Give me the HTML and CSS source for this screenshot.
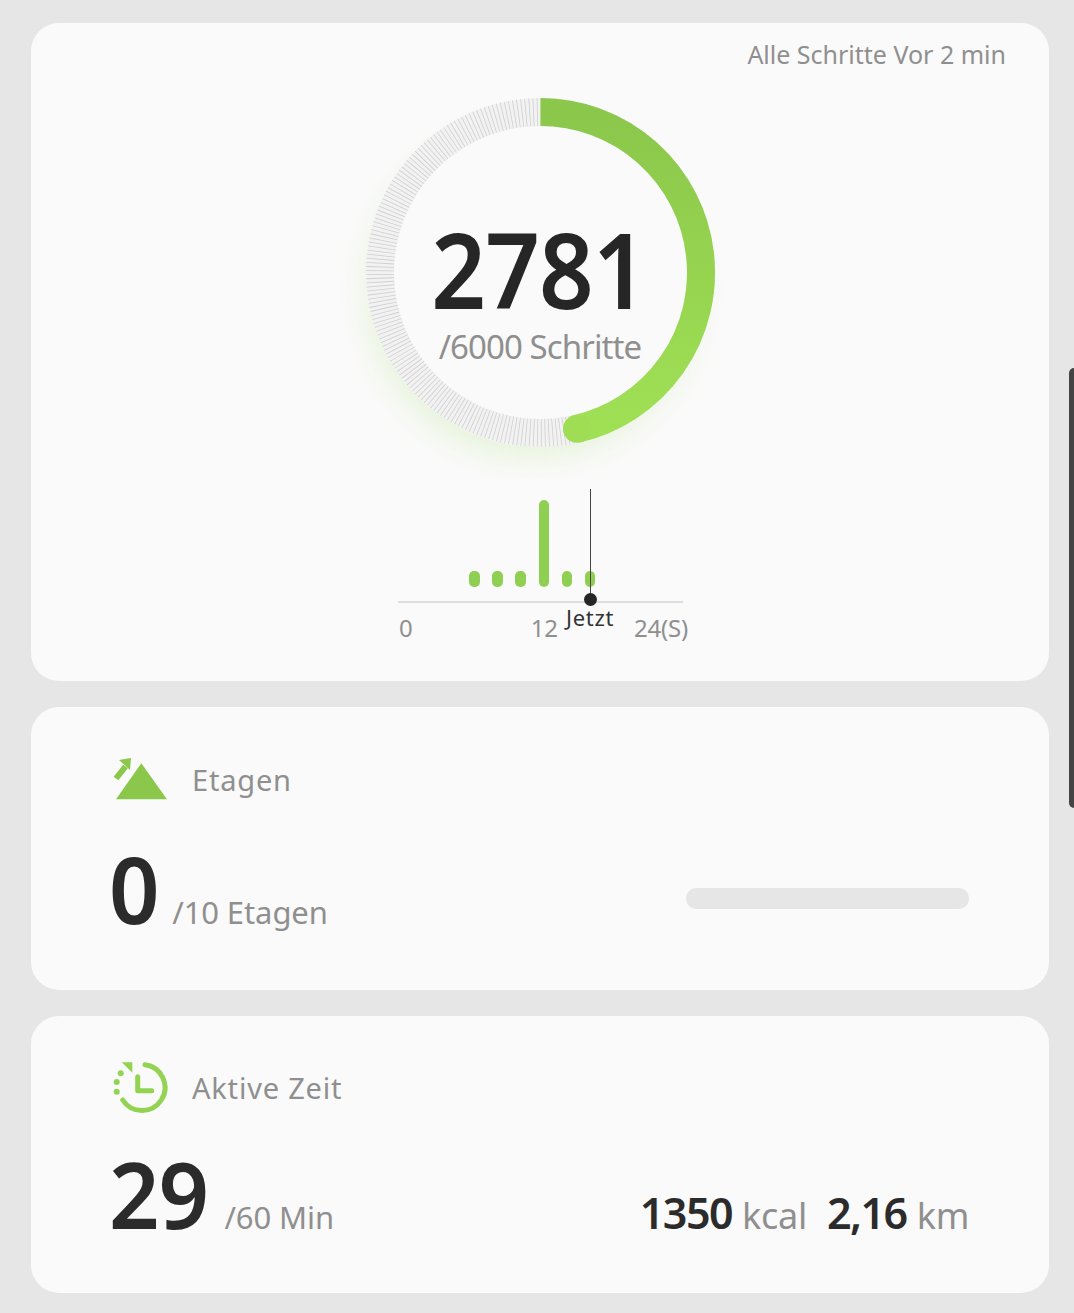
FILE: index.html
```html
<!DOCTYPE html>
<html lang="de">
<head>
  <meta charset="UTF-8">
  <title>Schritte</title>
  <link rel="stylesheet" href="styles.css">
</head>
<body>
  <div class="edge-handle"></div>

  <section class="card steps-card">
    <div class="updated">Alle Schritte Vor 2 min</div>

    <div class="ring-wrap">
      <svg class="ring" width="390" height="410" viewBox="0 0 390 410">
        <defs>
          <linearGradient id="ringGreen" x1="0" y1="0" x2="0" y2="1">
            <stop offset="0" stop-color="#8bc74b"/>
            <stop offset="1" stop-color="#a0e055"/>
          </linearGradient>
          <filter id="glow" x="-30%" y="-30%" width="160%" height="160%">
            <feGaussianBlur stdDeviation="16"/>
          </filter>
        </defs>
        <circle class="ring-glow" cx="187" cy="195" r="165" filter="url(#glow)"/>
        <circle class="ring-inner" cx="195.500" cy="175.500" r="174.500"/>
        <circle class="ring-track" cx="195.500" cy="175.500" r="160.500"/>
        <circle class="ring-hatch" cx="195.500" cy="175.500" r="160.500"/>
        <path class="ring-progress" stroke="url(#ringGreen)" d="M195.500 15 A160.500 160.500 0 0 1 232 331.800"/>
        <circle class="ring-cap" cx="232" cy="331.800" r="14"/>
      </svg>
      <div class="ring-text">
        <div class="ring-count">2781</div>
        <div class="ring-goal">/6000 Schritte</div>
      </div>
    </div>

    <div class="chart">
      <div class="bars">
        <span class="bar"></span>
        <span class="bar"></span>
        <span class="bar"></span>
        <span class="bar bar-tall"></span>
        <span class="bar"></span>
        <span class="bar"></span>
      </div>
      <div class="axis"></div>
      <div class="axis-labels">
        <span>0</span>
        <span class="label-mid">12</span>
        <span>24(S)</span>
      </div>
      <div class="now-line"></div>
      <div class="now-dot"></div>
      <div class="now-label">Jetzt</div>
    </div>
  </section>

  <section class="card floors-card">
    <div class="card-head">
      <svg class="card-icon" width="60" height="50" viewBox="0 0 60 50">
        <path class="icon-fill" d="M30.300 8.300 L56 44.300 L5 44.300 Z"/>
        <path class="icon-fill" d="M20 3 L8 5 L19 15 Z"/>
        <path class="icon-shaft" d="M5 23.500 L14.500 11.500"/>
      </svg>
      <span class="card-title">Etagen</span>
    </div>
    <div class="stat-row floors-row">
      <div class="stat-main">
        <span class="big-number">0</span>
        <span class="stat-goal">/10 Etagen</span>
      </div>
      <div class="progress-empty"></div>
    </div>
  </section>

  <section class="card active-card">
    <div class="card-head">
      <svg class="card-icon" width="60" height="56" viewBox="0 0 60 56">
        <path class="icon-line" d="M34 4.700 A23 23 0 1 1 11.700 40"/>
        <path class="icon-line" d="M26.700 16.700 L26.700 30.700 L40.700 30.700"/>
        <path class="icon-light" d="M10.700 2.300 L21.300 2.300 L21.300 12.700 Z"/>
        <circle class="icon-light" cx="9.700" cy="13.300" r="3"/>
        <circle class="icon-light" cx="5.700" cy="22" r="3"/>
        <circle class="icon-light" cx="5.700" cy="31.700" r="3"/>
      </svg>
      <span class="card-title">Aktive Zeit</span>
    </div>
    <div class="stat-row active-row">
      <div class="stat-main">
        <span class="big-number">29</span>
        <span class="stat-goal">/60 Min</span>
      </div>
      <div class="stat-side">
        <span class="side-number">1350</span>
        <span class="side-unit">kcal</span>
        <span class="side-number side-gap">2,16</span>
        <span class="side-unit">km</span>
      </div>
    </div>
  </section>
</body>
</html>
```
FILE: styles.css
```css
html, body {
  margin: 0;
  height: 1313px;
  overflow: hidden;
}
body {
  background: #e6e6e6;
  padding: 23px 25px 0 31px;
  box-sizing: border-box;
  font-family: "Noto Sans", sans-serif;
  color: #8f8f8f;
  display: flex;
  flex-direction: column;
  gap: 26px;
  position: relative;
}
.edge-handle {
  position: absolute;
  top: 368px;
  right: 0;
  width: 5px;
  height: 440px;
  background: #444;
  border-radius: 6px 0 0 6px;
}
.card {
  background: #fafafa;
  border-radius: 28px;
  box-sizing: border-box;
}

/* Steps card */
.steps-card {
  height: 658px;
  display: flex;
  flex-direction: column;
  padding-top: 13px;
}
.updated {
  align-self: flex-end;
  margin-right: 43px;
  font-size: 25px;
  line-height: 36px;
}
.ring-wrap {
  position: relative;
  align-self: center;
  width: 390px;
  height: 392px;
  margin-top: 25px;
}
.ring {
  display: block;
  overflow: visible;
}
.ring-glow {
  fill: #a5dd70;
  opacity: 0.24;
}
.ring-inner {
  fill: #fafafa;
}
.ring-track {
  fill: #fafafa;
  stroke: #f2f2f2;
  stroke-width: 28;
}
.ring-hatch {
  fill: none;
  stroke: #cfcfcf;
  stroke-width: 28;
  stroke-dasharray: 0.8 3;
}
.ring-progress {
  fill: none;
  stroke-width: 28;
}
.ring-cap {
  fill: #9fdd55;
}
.ring-text {
  position: absolute;
  top: 127px;
  left: 0;
  right: 0;
  text-align: center;
}
.ring-count {
  font-size: 104px;
  line-height: 90px;
  font-weight: 600;
  letter-spacing: -1px;
  color: #262626;
  margin-left: -2px;
  transform: scaleX(0.92);
}
.ring-goal {
  font-size: 33px;
  line-height: 44px;
  letter-spacing: -0.9px;
  margin-top: 11px;
}

/* Hourly chart */
.chart {
  position: relative;
  width: 290px;
  height: 150px;
  margin: 0 0 0 367px;
}
.bars {
  display: flex;
  align-items: flex-end;
  gap: 12.7px;
  height: 87px;
  padding: 11px 0 0 71px;
}
.bar {
  width: 10.5px;
  height: 16px;
  background: #8fd053;
  border-radius: 5px;
}
.bar-tall {
  height: 87px;
}
.axis {
  width: 285px;
  height: 2px;
  margin-top: 14px;
  background: #dedede;
}
.axis-labels {
  display: flex;
  justify-content: space-between;
  margin-top: 10px;
  padding-left: 1px;
  font-size: 24px;
  line-height: 30px;
  letter-spacing: -0.2px;
}
.label-mid {
  margin-left: 42px;
}
.now-line {
  position: absolute;
  left: 191.500px;
  top: 0;
  width: 1.5px;
  height: 110px;
  background: #444;
}
.now-dot {
  position: absolute;
  left: 185.500px;
  top: 103.500px;
  width: 13px;
  height: 13px;
  border-radius: 50%;
  background: #262626;
}
.now-label {
  position: absolute;
  left: 142px;
  width: 100px;
  top: 113px;
  text-align: center;
  font-size: 22px;
  line-height: 30px;
  letter-spacing: 0.7px;
  color: #333;
}

/* Floors and active time */
.floors-card {
  height: 283px;
  padding: 48px 80px 0 80px;
}
.active-card {
  height: 277px;
  padding: 44px 80px 0 80px;
}
.card-head {
  display: flex;
  align-items: center;
  gap: 21px;
}
.card-icon {
  display: block;
  flex: none;
}
.card-title {
  font-size: 29px;
  line-height: 44px;
  letter-spacing: 0.8px;
}
.icon-fill {
  fill: #8bc74b;
}
.icon-shaft {
  fill: none;
  stroke: #8bc74b;
  stroke-width: 6;
}
.icon-line {
  fill: none;
  stroke: #92d352;
  stroke-width: 5;
  stroke-linecap: round;
  stroke-linejoin: round;
}
.icon-light {
  fill: #92d352;
}
.stat-row {
  display: flex;
  justify-content: space-between;
  align-items: baseline;
}
.floors-row {
  margin-top: 28px;
}
.active-row {
  margin-top: 22px;
}
.stat-main {
  display: flex;
  align-items: baseline;
  gap: 11px;
  margin-left: -2px;
}
.big-number {
  font-size: 93px;
  line-height: 110px;
  font-weight: 600;
  letter-spacing: -1px;
  color: #2b2b2b;
  transform: scaleX(0.95);
  transform-origin: left;
}
.stat-goal {
  font-size: 31px;
  letter-spacing: -0.1px;
}
.progress-empty {
  width: 283px;
  height: 21px;
  margin-top: 20px;
  border-radius: 10px;
  background: #e6e6e6;
  align-self: center;
}
.stat-side {
  display: flex;
  align-items: baseline;
  gap: 10px;
}
.side-number {
  font-size: 43px;
  font-weight: 600;
  letter-spacing: -1.5px;
  color: #2b2b2b;
}
.side-gap {
  margin-left: 10px;
}
.side-unit {
  font-size: 36px;
  letter-spacing: -0.3px;
}
```
